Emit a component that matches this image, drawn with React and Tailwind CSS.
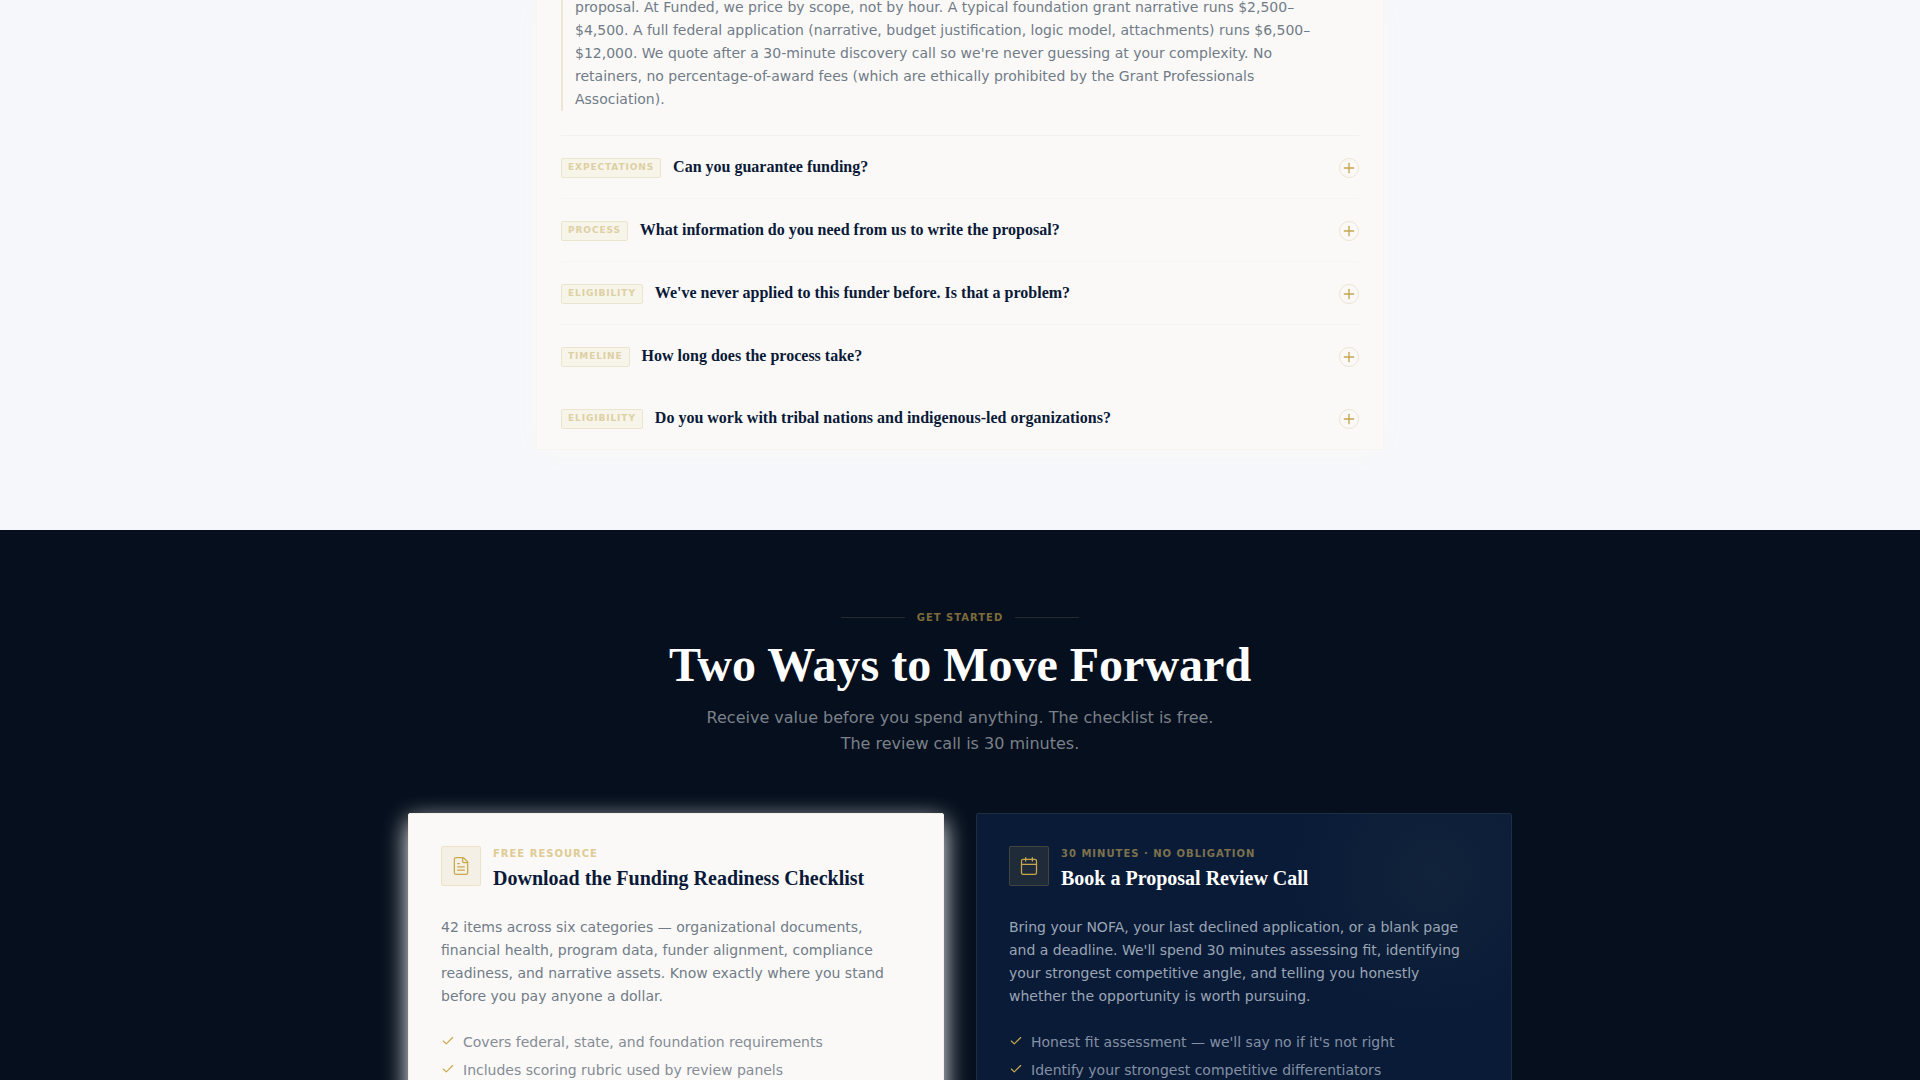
import React, { useState } from 'react';
import { Plus, Check, FileText, Calendar } from 'lucide-react';

const faqs = [
  { tag: 'EXPECTATIONS', question: 'Can you guarantee funding?', border: true },
  { tag: 'PROCESS', question: 'What information do you need from us to write the proposal?', border: true },
  { tag: 'ELIGIBILITY', question: "We've never applied to this funder before. Is that a problem?", border: true },
  { tag: 'TIMELINE', question: 'How long does the process take?', border: false },
  { tag: 'ELIGIBILITY', question: 'Do you work with tribal nations and indigenous-led organizations?', border: false },
];

const checklist = [
  'Covers federal, state, and foundation requirements',
  'Includes scoring rubric used by review panels',
];

const reviewCall = [
  "Honest fit assessment — we'll say no if it's not right",
  'Identify your strongest competitive differentiators',
];

const FaqItem = ({ tag, question, border, open, onToggle }) => (
  <div className={border ? 'border-b border-[#f6f4f0]' : ''}>
    <button
      type="button"
      onClick={onToggle}
      aria-expanded={open}
      className="flex w-full items-start justify-between gap-4 py-5 text-left cursor-pointer"
    >
      <span className="flex items-start gap-3">
        <span className="mt-0.5 shrink-0 rounded-xs border border-[#ebe5cf] bg-[#f7f4ea] px-1.5 pb-0.5 text-[9px] leading-4 font-bold tracking-widest text-[#ddd0a3]">
          {tag}
        </span>
        <span className="font-['Liberation_Serif',serif] text-base leading-[22px] font-bold text-[#0a1a38]">
          {question}
        </span>
      </span>
      <span className="mt-0.5 flex size-5 shrink-0 items-center justify-center rounded-full border border-[#ebe5d3] text-[#c4a64e]">
        <Plus size={16} strokeWidth={2} className="shrink-0" />
      </span>
    </button>
  </div>
);

const CardHeader = ({ icon: Icon, label, title, dark }) => (
  <div className="mb-6 flex items-start gap-3">
    <div
      className={`flex size-10 shrink-0 items-center justify-center rounded-xs border border-[#c9a84c]/20 text-[#c9a84c] ${
        dark ? 'bg-[#c9a84c]/12' : 'bg-[#c9a84c]/10'
      }`}
    >
      <Icon size={20} strokeWidth={1.5} />
    </div>
    <div>
      <p
        className={`text-[10px] leading-[15px] font-bold tracking-widest ${
          dark ? 'text-[#7d724c]' : 'text-[#dfcb94]'
        }`}
      >
        {label}
      </p>
      <h3
        className={`mt-1 font-['Liberation_Serif',serif] text-xl leading-[27px] font-bold ${
          dark ? 'text-white' : 'text-[#0a1a38]'
        }`}
      >
        {title}
      </h3>
    </div>
  </div>
);

const CheckList = ({ items, dark }) => (
  <ul className={`mt-6 flex flex-col gap-2 text-sm leading-5 ${dark ? 'text-[#8490a3]' : 'text-[#858c95]'}`}>
    {items.map((item) => (
      <li key={item} className="flex items-start gap-2">
        <Check size={14} strokeWidth={2} className="mt-0.5 shrink-0 text-[#c9a84c]" />
        {item}
      </li>
    ))}
  </ul>
);

const App = () => {
  const [openIndex, setOpenIndex] = useState(null);

  return (
    <div className="overflow-hidden bg-[#f5f7fa] font-['DejaVu_Sans',sans-serif]">
      {/* FAQ */}
      <section className="pb-20">
        <div className="mx-auto max-w-4xl px-6">
          <div className="border border-t-0 border-[#f7f5ee] bg-[#faf9f7] px-6 shadow-[0_4px_24px_#faf9f7]">
            <div className="border-b border-[#f3f1ec] pb-6">
              <div className="-mt-1 border-l-2 border-[#ece6d2] pr-8 pl-3">
                <p className="text-sm leading-[23px] text-[#717c88]">
                  proposal. At Funded, we price by scope, not by hour. A typical foundation grant narrative
                  runs $2,500–$4,500. A full federal application (narrative, budget justification, logic
                  model, attachments) runs $6,500–$12,000. We quote after a 30-minute discovery call so
                  we're never guessing at your complexity. No retainers, no percentage-of-award fees (which
                  are ethically prohibited by the Grant Professionals Association).
                </p>
              </div>
            </div>
            {faqs.map((faq, index) => (
              <FaqItem
                key={index}
                {...faq}
                open={openIndex === index}
                onToggle={() => setOpenIndex(openIndex === index ? null : index)}
              />
            ))}
          </div>
        </div>
      </section>

      {/* Get started */}
      <section className="bg-[#050f1d] pt-20">
        <div className="mx-auto max-w-6xl px-6">
          <div className="mb-14 text-center">
            <div className="mb-3 flex items-center justify-center gap-3">
              <span className="h-px w-16 bg-[#252b2c]" />
              <span className="text-[10px] leading-[15px] font-bold tracking-widest text-[#7d6c3a]">
                GET STARTED
              </span>
              <span className="h-px w-16 bg-[#252b2c]" />
            </div>
            <h2 className="font-['Liberation_Serif',serif] text-5xl leading-14 font-bold text-white">
              Two Ways to Move Forward
            </h2>
            <p className="mx-auto mt-3 max-w-xl text-base leading-[26px] text-[#7b818a]">
              Receive value before you spend anything. The checklist is free.
              <br />
              The review call is 30 minutes.
            </p>
          </div>

          <div className="grid grid-cols-1 gap-8 md:grid-cols-2">
            <div className="rounded-xs border border-[#f3f0e8] bg-[#faf9f7] p-8 shadow-[0_8px_24px_#faf9f7]">
              <CardHeader
                icon={FileText}
                label="FREE RESOURCE"
                title="Download the Funding Readiness Checklist"
              />
              <p className="text-sm leading-[23px] text-[#717c88]">
                42 items across six categories — organizational documents, financial health, program data,
                funder alignment, compliance readiness, and narrative assets. Know exactly where you stand
                before you pay anyone a dollar.
              </p>
              <CheckList items={checklist} />
            </div>

            <div className="rounded-xs border border-[#1e2d40] bg-[#0a1b38] bg-[radial-gradient(circle_at_456px_60px,#11233a_0%,#0a1b38_140px)] p-8">
              <CardHeader
                icon={Calendar}
                label="30 MINUTES · NO OBLIGATION"
                title="Book a Proposal Review Call"
                dark
              />
              <p className="text-sm leading-[23px] text-[#9ba5b4]">
                Bring your NOFA, your last declined application, or a blank page and a deadline. We'll spend
                30 minutes assessing fit, identifying your strongest competitive angle, and telling you
                honestly whether the opportunity is worth pursuing.
              </p>
              <CheckList items={reviewCall} dark />
            </div>
          </div>
        </div>
      </section>
    </div>
  );
};

export default App;
